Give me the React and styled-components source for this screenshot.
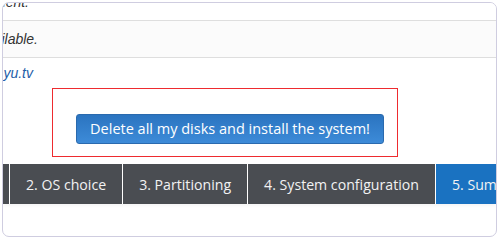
import React from "react";
import styled, { createGlobalStyle } from "styled-components";

const Global = createGlobalStyle`
  html, body { margin: 0; padding: 0; background: #fff; }
  body { font-family: "Open Sans", "Liberation Sans", sans-serif; }
`;

const Page = styled.div`
  padding: 2px;
  width: 500px;
  height: 240px;
  box-sizing: border-box;
`;

const Frame = styled.div`
  box-sizing: border-box;
  width: 495px;
  height: 235px;
  border: 1px solid #cfcde0;
  border-radius: 7px;
  overflow: hidden;
  display: flex;
  flex-direction: column;
  background: #fff;
`;

const Row = styled.div`
  flex: none;
  display: flex;
  align-items: ${(p) => (p.$cut ? "flex-end" : "flex-start")};
  height: ${(p) => p.$h}px;
  background: ${(p) => (p.$shade ? "#fbfbfb" : "#fff")};
  border-bottom: ${(p) => (p.$line ? "1px solid #dedede" : "none")};
`;

const TextCell = styled.div`
  flex: none;
  width: ${(p) => p.$end}px;
  display: flex;
  justify-content: flex-end;
  white-space: nowrap;
  font-family: "Liberation Sans", Arial, sans-serif;
  font-style: italic;
  font-size: 14px;
  line-height: ${(p) => p.$lh}px;
  color: #333;
`;

const Link = styled.a`
  color: #1f5ea8;
  text-decoration: none;
`;

const Highlight = styled.div`
  flex: none;
  align-self: flex-start;
  margin-left: 49px;
  border: 1px solid #ee2b2f;
  padding: 25px 13px 12px 23px;
`;

const DangerButton = styled.button`
  display: block;
  box-sizing: border-box;
  width: 308px;
  height: 30px;
  padding: 0 10px;
  border: 1px solid #2a6aae;
  border-radius: 3px;
  background: linear-gradient(to bottom, #2b74c0, #3d8bd8);
  color: #fff;
  font-family: "Open Sans", sans-serif;
  font-size: 14.5px;
  line-height: 28px;
  white-space: nowrap;
  cursor: pointer;
`;

const TabBar = styled.div`
  flex: none;
  margin-top: 7px;
  display: flex;
  height: 40px;
  box-shadow: 0 2px 3px rgba(0, 0, 0, 0.04);
`;

const Tab = styled.div`
  flex: ${(p) => (p.$grow ? "1 1 auto" : "none")};
  width: ${(p) => (p.$w ? `${p.$w}px` : "auto")};
  display: flex;
  align-items: center;
  justify-content: ${(p) => (p.$w ? "flex-end" : "flex-start")};
  padding: ${(p) => (p.$w ? "0" : "0 16px")};
  box-sizing: border-box;
  border-left: ${(p) => (p.$first ? "none" : "1px solid #fff")};
  background: ${(p) => (p.$active ? "#1a72c1" : "#4a4d52")};
  color: #f2f2f2;
  font-family: "Open Sans", sans-serif;
  font-size: 14.15px;
  white-space: nowrap;
`;

export default function App() {
  return (
    <>
      <Global />
      <Page>
        <Frame>
          <Row $h={17} $cut $line>
            <TextCell $end={26} $lh={36}>The available disk space is sufficient.</TextCell>
          </Row>
          <Row $h={36} $shade $line>
            <TextCell $end={35} $lh={36}>A wired network connection is not available.</TextCell>
          </Row>
          <Row $h={30}>
            <TextCell $end={30} $lh={31}>
              <Link href="#">http://installer.yu.tv</Link>
            </TextCell>
          </Row>
          <Highlight>
            <DangerButton>Delete all my disks and install the system!</DangerButton>
          </Highlight>
          <TabBar>
            <Tab $first $w={6}>1. Language&nbsp;&nbsp;&nbsp;&nbsp;</Tab>
            <Tab>2. OS choice</Tab>
            <Tab>3. Partitioning</Tab>
            <Tab>4. System configuration</Tab>
            <Tab $active $grow>5. Summary</Tab>
          </TabBar>
        </Frame>
      </Page>
    </>
  );
}
